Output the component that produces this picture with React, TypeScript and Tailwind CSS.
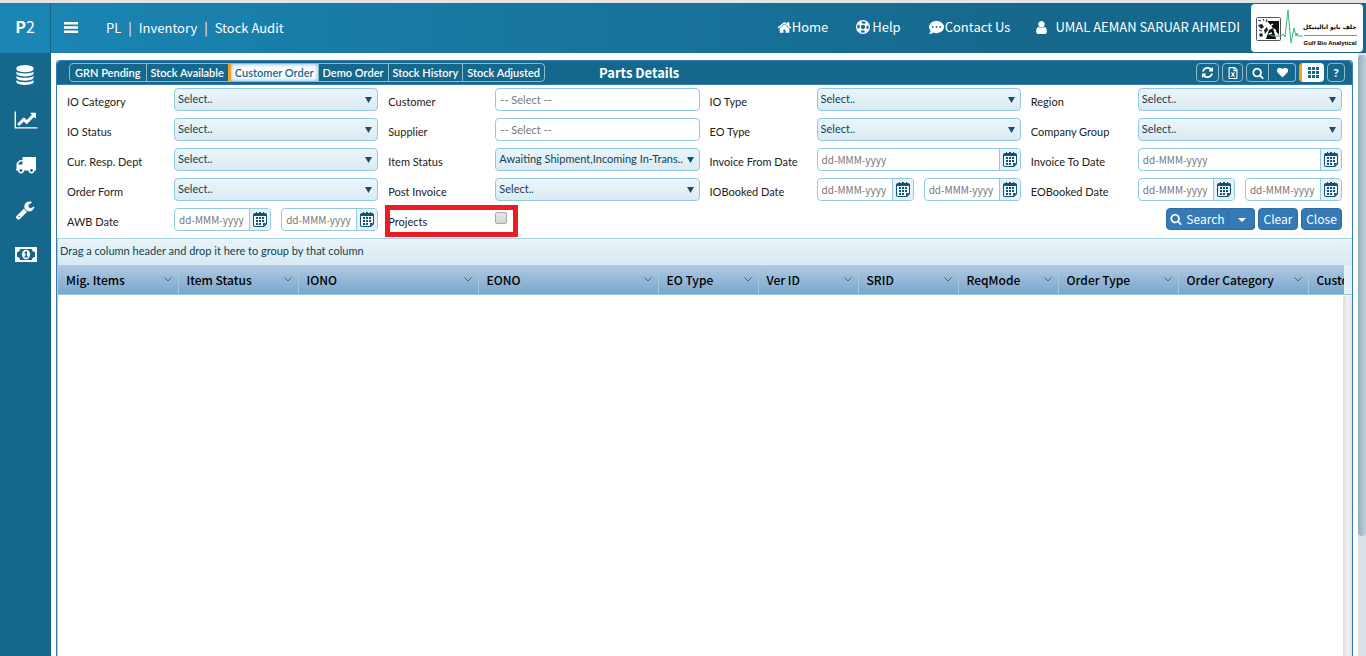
import { useId, type ReactNode } from 'react';
import { FaRegFileExcel, FaHeart, FaCommentDots } from 'react-icons/fa';

type IconProps = { className?: string };

const HomeIcon = ({ className }: IconProps) => (
  <svg viewBox="0 0 1792 1792" fill="currentColor" className={className} aria-hidden="true">
    <path d="M1472 992v480q0 26-19 45t-45 19h-384v-384h-256v384h-384q-26 0-45-19t-19-45v-480q0-1 .5-3t.5-3l575-474 575 474q1 2 1 6zm223-69l-62 74q-8 9-21 11h-3q-13 0-21-7l-692-577-692 577q-12 8-24 7-13-2-21-11l-62-74q-8-10-7-23.5t11-21.5l719-599q32-26 76-26t76 26l244 204v-195q0-14 9-23t23-9h192q14 0 23 9t9 23v408l219 182q10 8 11 21.5t-7 23.5z" />
  </svg>
);

const LifeRingIcon = ({ className }: IconProps) => (
  <svg viewBox="0 0 28 28" fill="none" stroke="currentColor" className={className} aria-hidden="true">
    <circle cx="14" cy="14" r="12.7" strokeWidth="2.6" />
    <circle cx="14" cy="14" r="5.6" strokeWidth="2.6" />
    <circle cx="14" cy="14" r="9.2" strokeWidth="6" strokeDasharray="7.2 7.25" strokeDashoffset="-3.6" />
  </svg>
);

const UserIcon = ({ className }: IconProps) => (
  <svg viewBox="0 0 1792 1792" fill="currentColor" className={className} aria-hidden="true">
    <path d="M1536 1399q0 109-62.5 187t-150.5 78h-854q-88 0-150.5-78t-62.5-187q0-85 8.5-160.5t31.5-152 58.5-131 94-89 134.5-34.5q131 128 313 128t313-128q76 0 134.5 34.5t94 89 58.5 131 31.5 152 8.5 160.5zm-256-887q0 159-112.5 271.5t-271.5 112.5-271.5-112.5-112.5-271.5 112.5-271.5 271.5-112.5 271.5 112.5 112.5 271.5z" />
  </svg>
);

const DatabaseIcon = ({ className }: IconProps) => (
  <svg viewBox="0 0 1792 1792" fill="currentColor" className={className} aria-hidden="true">
    <path d="M896 768q237 0 443-43t325-127v170q0 69-103 128t-280 93.5-385 34.5-385-34.5-280-93.5-103-128v-170q119 84 325 127t443 43zm0 768q237 0 443-43t325-127v170q0 69-103 128t-280 93.5-385 34.5-385-34.5-280-93.5-103-128v-170q119 84 325 127t443 43zm0-384q237 0 443-43t325-127v170q0 69-103 128t-280 93.5-385 34.5-385-34.5-280-93.5-103-128v-170q119 84 325 127t443 43zm0-1152q208 0 385 34.5t280 93.5 103 128v128q0 69-103 128t-280 93.5-385 34.5-385-34.5-280-93.5-103-128v-128q0-69 103-128t280-93.5 385-34.5z" />
  </svg>
);

const LineChartIcon = ({ className }: IconProps) => (
  <svg viewBox="0 0 2048 1792" fill="currentColor" className={className} aria-hidden="true">
    <path d="M2048 1536v128h-2048v-1536h128v1408h1920zm-128-1248v435q0 21-19.5 29.5t-35.5-7.5l-121-121-633 633q-10 10-23 10t-23-10l-233-233-416 416-192-192 585-585q10-10 23-10t23 10l233 233 464-464-121-121q-16-16-7.5-35.5t29.5-19.5h435q14 0 23 9t9 23z" />
  </svg>
);

const TruckIcon = ({ className }: IconProps) => (
  <svg viewBox="0 0 1792 1792" fill="currentColor" className={className} aria-hidden="true">
    <path d="M640 1408q0-52-38-90t-90-38-90 38-38 90 38 90 90 38 90-38 38-90zm-384-512h384v-256h-158q-13 0-22 9l-195 195q-9 9-9 22v30zm1280 512q0-52-38-90t-90-38-90 38-38 90 38 90 90 38 90-38 38-90zm256-1088v1024q0 15-4 26.5t-13.5 18.5-16.5 11.5-23.5 6-22.5 2-25.5 0-22.5-.5q0 106-75 181t-181 75-181-75-75-181h-384q0 106-75 181t-181 75-181-75-75-181h-64q-3 0-22.5.5t-25.5 0-22.5-2-23.5-6-16.5-11.5-13.5-18.5-4-26.5q0-26 19-45t45-19v-320q0-8-.5-35t0-38 2.5-34.5 6.5-37 14-30.5 22.5-30l198-198q19-19 50.5-32t58.5-13h160v-192q0-26 19-45t45-19h1024q26 0 45 19t19 45z" />
  </svg>
);

const WrenchIcon = ({ className }: IconProps) => (
  <svg viewBox="0 0 1792 1792" fill="currentColor" className={className} aria-hidden="true">
    <path d="M448 1472q0-26-19-45t-45-19-45 19-19 45 19 45 45 19 45-19 19-45zm644-420l-682 682q-37 37-90 37-52 0-91-37l-106-108q-38-36-38-90 0-53 38-91l681-681q39 98 114.5 173.5t173.5 114.5zm634-435q0 39-23 106-47 134-164.5 217.5t-258.5 83.5q-185 0-316.5-131.5t-131.5-316.5 131.5-316.5 316.5-131.5q58 0 121.5 16.5t107.5 46.5q16 11 16 28t-16 28l-293 169v224l193 107q5-3 79-48.5t135.5-81 70.5-35.5q15 0 23.5 10t8.5 25z" />
  </svg>
);

const MoneyIcon = ({ className }: IconProps) => (
  <svg viewBox="0 0 22 15" className={className} aria-hidden="true">
    <path fill="currentColor" d="M0 0h22v15H0z" />
    <path fill="#15678b" d="M5 2h12a3 3 0 0 0 3 3v5a3 3 0 0 0-3 3H5a3 3 0 0 0-3-3V5a3 3 0 0 0 3-3z" />
    <ellipse cx="11" cy="7.5" rx="4" ry="4.8" fill="currentColor" />
    <path fill="#15678b" d="M9.2 5.6 11 4.2h1v5h1v1.2H9.4V9.2h1.1V6.1l-.7.5z" />
  </svg>
);

const RefreshIcon = ({ className }: IconProps) => (
  <svg viewBox="0 0 1792 1792" fill="currentColor" className={className} aria-hidden="true">
    <path d="M1639 1056q0 5-1 7-64 268-268 434.5t-478 166.5q-146 0-282.5-55t-243.5-157l-129 129q-19 19-45 19t-45-19-19-45v-448q0-26 19-45t45-19h448q26 0 45 19t19 45-19 45l-137 137q71 66 161 102t187 36q134 0 250-65t186-179q11-17 53-117 8-23 30-23h192q13 0 22.5 9.5t9.5 22.5zm25-800v448q0 26-19 45t-45 19h-448q-26 0-45-19t-19-45 19-45l138-138q-148-137-349-137-134 0-250 65t-186 179q-11 17-53 117-8 23-30 23h-199q-13 0-22.5-9.5t-9.5-22.5v-7q65-268 270-434.5t480-166.5q146 0 284 55.5t245 156.5l130-129q19-19 45-19t45 19 19 45z" />
  </svg>
);

const SearchIcon = ({ className }: IconProps) => (
  <svg viewBox="0 0 1792 1792" fill="currentColor" className={className} aria-hidden="true">
    <path d="M1216 832q0-185-131.5-316.5t-316.5-131.5-316.5 131.5-131.5 316.5 131.5 316.5 316.5 131.5 316.5-131.5 131.5-316.5zm512 832q0 52-38 90t-90 38q-54 0-90-38l-343-342q-179 124-399 124-143 0-273.5-55.5t-225-150-150-225-55.5-273.5 55.5-273.5 150-225 225-150 273.5-55.5 273.5 55.5 225 150 150 225 55.5 273.5q0 220-124 399l343 343q37 37 37 90z" />
  </svg>
);

const GridIcon = ({ className }: IconProps) => (
  <svg viewBox="0 0 11 11" fill="currentColor" className={className} aria-hidden="true">
    <path d="M0 0h3v3H0zM4 0h3v3H4zM8 0h3v3H8zM0 4h3v3H0zM4 4h3v3H4zM8 4h3v3H8zM0 8h3v3H0zM4 8h3v3H4zM8 8h3v3H8z" />
  </svg>
);

const CalendarIcon = ({ className }: IconProps) => (
  <svg viewBox="0 0 14 15" fill="currentColor" className={className} aria-hidden="true">
    <path d="M2 1h10a2 2 0 0 1 2 2v9l-3 3H2a2 2 0 0 1-2-2V3a2 2 0 0 1 2-2z" />
    <path fill="#f1f8fb" d="M1 4h12v7l-3 3H2a1 1 0 0 1-1-1z" />
    <path d="M3 0h1v2H3zM10 0h1v2h-1zM6 0h2v2H6z" />
    <path d="M6 5h2v2H6zM9 5h2v2H9zM3 5h2v2H3zM3 8h2v2H3zM6 8h2v2H6zM9 8h2v2H9zM3 11h2v2H3zM6 11h2v2H6zM10 11h3l-3 3z" />
  </svg>
);

const Logo = () => (
  <div className="flex h-12 w-28 items-center rounded bg-white pl-1">
    <svg viewBox="0 0 48 46" className="h-[46px] w-12 shrink-0" aria-hidden="true">
      <rect x="1.500" y="12.500" width="24" height="23" rx="1" fill="#fff" stroke="#555" />
      <path d="M12 16h12v14z" fill="#111" />
      <path d="M11 34l3-9 4-2 3 11z" fill="#111" />
      <path d="M3 20l4-1 2 3-3 2zM9 25l3-3 1 3-3 4zM4 29l3-1 1 3-3 1z" fill="#222" />
      <path d="M3 15l3 1M8 14l1 2M12 14l-1 3M4 25l3 1" stroke="#333" />
      <path d="M15 21l3-2M19 24l2 2M14 29l3-1" stroke="#fff" strokeWidth="1.500" />
      <path d="M13 29l5 2h8l2-2 2 3 3-27 3 33 3-15 2 8 1-3 1 3h5" fill="none" stroke="#35b877" />
    </svg>
    <div className="flex flex-col items-end pt-4 whitespace-nowrap text-black">
      <span lang="ar" dir="rtl" className="pb-1 font-['DejaVu_Sans',sans-serif] text-[6px] leading-2 font-bold">
        جلف بايو اناليتيكل
      </span>
      <span className="border-t border-[#35b877] pt-px font-['Liberation_Sans_Narrow','Liberation_Sans',sans-serif] text-[6px] leading-3 font-bold">
        Gulf Bio Analytical
      </span>
    </div>
  </div>
);

const Header = () => (
  <header className="flex h-[53px] border-t-3 border-[#e4e4e4] bg-linear-to-r from-[#1b86b5] to-[#15688c] to-75% font-['Noto_Sans_CJK_SC',sans-serif] text-[13px] leading-5 text-white">
    <a href="#" className="flex w-[51px] items-center justify-center border-r border-[#15678b] pb-1 text-base">
      <b>P</b>2
    </a>
    <button type="button" aria-label="Toggle menu" className="ml-3 px-px pb-0.5">
      <svg viewBox="0 0 14 11" fill="currentColor" className="h-[11px] w-3.5" aria-hidden="true">
        <path d="M0 0h14v2.500H0zM0 4.250h14v2.500H0zM0 8.500h14V11H0z" />
      </svg>
    </button>
    <nav aria-label="Breadcrumb" className="ml-[27px] flex items-center gap-[7px]">
      <a href="#">PL</a>
      <span>|</span>
      <a href="#">Inventory</a>
      <span>|</span>
      <a href="#">Stock Audit</a>
    </nav>
    <nav aria-label="Main" className="ml-auto flex items-center gap-7 pb-0.5">
      <a href="#" className="flex items-center">
        <HomeIcon className="size-[15px]" />
        Home
      </a>
      <a href="#" className="flex items-center gap-0.5">
        <LifeRingIcon className="size-3.5" />
        Help
      </a>
      <a href="#" className="flex items-center gap-px">
        <FaCommentDots className="size-[15px]" />
        Contact Us
      </a>
      <a href="#" className="-ml-1 flex items-center gap-1.5">
        <UserIcon className="size-[15px]" />
        UMAL AEMAN SARUAR AHMEDI
      </a>
    </nav>
    <a href="#" aria-label="Gulf Bio Analytical" className="mt-px mr-[3px] ml-[11px]">
      <Logo />
    </a>
  </header>
);

const Sidebar = () => (
  <aside className="w-[51px] shrink-0 bg-[#15678b] text-white">
    <nav aria-label="Modules" className="-mt-px flex flex-col">
      <a href="#" aria-label="Stock" className="flex h-[45px] items-center justify-center pr-0.5">
        <DatabaseIcon className="size-5" />
      </a>
      <a href="#" aria-label="Reports" className="flex h-[45px] items-center justify-center">
        <LineChartIcon className="h-5 w-6" />
      </a>
      <a href="#" aria-label="Shipping" className="flex h-[45px] items-center justify-center">
        <TruckIcon className="size-[21px]" />
      </a>
      <a href="#" aria-label="Settings" className="flex h-[45px] items-center justify-center pr-0.5">
        <WrenchIcon className="size-5" />
      </a>
      <a href="#" aria-label="Finance" className="flex h-[45px] items-center justify-center">
        <MoneyIcon className="h-[15px] w-[22px]" />
      </a>
    </nav>
  </aside>
);

const tabs = ['GRN Pending', 'Stock Available', 'Customer Order', 'Demo Order', 'Stock History', 'Stock Adjusted'];

const toolButton = 'flex h-[19px] items-center justify-center';

const TitleBar = () => (
  <div className="flex h-6 items-center rounded-t border-b border-[#337ab7] bg-[#15688c] pr-[7px] pl-3 text-white">
    <div className="flex h-[19px] rounded-sm border border-[#8fb9cc]">
      {tabs.map((tab) =>
        tab === 'Customer Order' ? (
          <button
            key={tab}
            type="button"
            aria-pressed="true"
            className="border-l-3 border-[#f9a11b] bg-white px-1 font-semibold text-[#15688c] shadow-[inset_0_0_4px_#66afe9]"
          >
            {tab}
          </button>
        ) : (
          <button key={tab} type="button" className="border-l border-[#8fb9cc] px-1 font-semibold first:border-l-0 first:px-[5px]">
            {tab}
          </button>
        )
      )}
    </div>
    <h1 className="ml-[54px] font-['Noto_Sans_CJK_SC',sans-serif] text-[13px] leading-5 font-bold">Parts Details</h1>
    <div className="ml-auto flex gap-[3px]">
      <button type="button" aria-label="Refresh" className={`${toolButton} w-[23px] rounded-sm border border-[#8fb9cc]`}>
        <RefreshIcon className="size-[13px]" />
      </button>
      <button type="button" aria-label="Export to Excel" className={`${toolButton} w-[21px] rounded-sm border border-[#8fb9cc]`}>
        <FaRegFileExcel className="size-3" />
      </button>
      <div className="flex">
        <button type="button" aria-label="Find" className={`${toolButton} w-[23px] rounded-l-sm border border-[#8fb9cc]`}>
          <SearchIcon className="size-3" />
        </button>
        <button type="button" aria-label="Favourites" className={`${toolButton} w-[27px] rounded-r-sm border border-l-0 border-[#8fb9cc]`}>
          <FaHeart className="size-[11px]" />
        </button>
      </div>
      <button
        type="button"
        aria-label="Grid view"
        aria-pressed="true"
        className={`${toolButton} w-[25px] rounded-sm border-l-3 border-[#f9a11b] bg-white text-[#15688c]`}
      >
        <GridIcon className="size-[11px]" />
      </button>
      <button type="button" className={`${toolButton} w-[18px] rounded-sm border border-[#8fb9cc] text-xs font-black`}>
        ?
      </button>
    </div>
  </div>
);

const Cell = ({ id, label, children }: { id: string; label: string; children: ReactNode }) => (
  <div className="grid h-[30px] grid-cols-3">
    <label htmlFor={id} className="truncate px-[5px] pt-[9px]">
      {label}
    </label>
    <div className="col-span-2 px-[5px] pt-[3px]">{children}</div>
  </div>
);

const SelectField = ({ label, value = 'Select..' }: { label: string; value?: string }) => {
  const id = useId();
  return (
    <Cell id={id} label={label}>
      <div className="relative">
        <select
          id={id}
          className="block h-[23px] w-full appearance-none rounded-sm border border-[#94cae1] bg-linear-to-b from-[#ebf5f9] to-[#dbebf3] pr-3 pb-px pl-[3px] text-[#153f52]"
        >
          <option>{value}</option>
        </select>
        <svg viewBox="0 0 7 6" fill="#15526f" className="pointer-events-none absolute top-[9px] right-1.5 h-1.5 w-[7px]" aria-hidden="true">
          <path d="M0 0h7L3.500 6z" />
        </svg>
      </div>
    </Cell>
  );
};

const TextField = ({ label }: { label: string }) => {
  const id = useId();
  return (
    <Cell id={id} label={label}>
      <input
        id={id}
        type="text"
        placeholder="-- Select --"
        className="block h-[23px] w-full rounded-sm border border-[#94cae1] px-1 placeholder:text-[#777]"
      />
    </Cell>
  );
};

const DateInput = ({ id, label }: { id?: string; label?: string }) => (
  <div className="flex h-[23px] min-w-0 flex-1 overflow-hidden rounded-sm border border-[#94cae1]">
    <input
      id={id}
      aria-label={label}
      type="text"
      placeholder="dd-MMM-yyyy"
      className="min-w-0 flex-1 pl-1 font-['Noto_Sans_CJK_SC',sans-serif] text-[10px] placeholder:text-[#777]"
    />
    <button
      type="button"
      aria-label="Open calendar"
      className="flex w-[21px] items-center justify-center border-l border-[#94cae1] bg-[#e6f2f7] text-[#15526f]"
    >
      <CalendarIcon className="h-[15px] w-3.5" />
    </button>
  </div>
);

const DateField = ({ label, range }: { label: string; range?: boolean }) => {
  const id = useId();
  return (
    <Cell id={id} label={label}>
      <div className="flex gap-2.5">
        <DateInput id={id} />
        {range && <DateInput label={`${label} to`} />}
      </div>
    </Cell>
  );
};

const SearchForm = () => (
  <form className="grid grid-cols-4 px-[5px] pb-[3px] text-[#222]">
    <SelectField label="IO Category" />
    <TextField label="Customer" />
    <SelectField label="IO Type" />
    <SelectField label="Region" />

    <SelectField label="IO Status" />
    <TextField label="Supplier" />
    <SelectField label="EO Type" />
    <SelectField label="Company Group" />

    <SelectField label="Cur. Resp. Dept" />
    <SelectField label="Item Status" value="Awaiting Shipment,Incoming In-Trans.." />
    <DateField label="Invoice From Date" />
    <DateField label="Invoice To Date" />

    <SelectField label="Order Form" />
    <SelectField label="Post Invoice" />
    <DateField label="IOBooked Date" range />
    <DateField label="EOBooked Date" range />

    <DateField label="AWB Date" range />
    <div className="relative">
      <Cell id="projects" label="Projects">
        <input
          id="projects"
          type="checkbox"
          className="mt-1 block size-3 appearance-none rounded-xs border border-[#a9a9a9] bg-linear-to-b from-[#e6e6e6] to-[#d6d6d6]"
        />
      </Cell>
      {/* highlight around the Projects option */}
      <div className="pointer-events-none absolute top-0 left-0.5 h-8 w-[133px] border-5 border-[#ed1c24]" />
    </div>
    <div className="col-start-4 flex h-[30px] items-start justify-end gap-[3px] px-[5px] pt-[3px] font-['Noto_Sans_CJK_SC',sans-serif] text-xs text-white">
      <div className="flex">
        <button type="button" className="flex h-[22px] w-[63px] items-center justify-center gap-1 rounded-l-sm border border-[#2e6da4] bg-[#337ab7]">
          <SearchIcon className="size-3" />
          Search
        </button>
        <button
          type="button"
          aria-label="More search options"
          className="flex h-[22px] w-[26px] items-center justify-center rounded-r-sm border border-l-0 border-[#2e6da4] bg-[#337ab7] pt-px"
        >
          <svg viewBox="0 0 8 4" fill="currentColor" className="h-1 w-2" aria-hidden="true">
            <path d="M0 0h8L4 4z" />
          </svg>
        </button>
      </div>
      <button type="button" className="h-[22px] w-10 rounded-sm border border-[#2e6da4] bg-[#337ab7]">Clear</button>
      <button type="button" className="h-[22px] w-[41px] rounded-sm border border-[#2e6da4] bg-[#337ab7]">Close</button>
    </div>
  </form>
);

const columns = [
  { name: 'Mig. Items', width: 120 },
  { name: 'Item Status', width: 120 },
  { name: 'IONO', width: 180 },
  { name: 'EONO', width: 180 },
  { name: 'EO Type', width: 100 },
  { name: 'Ver ID', width: 100 },
  { name: 'SRID', width: 100 },
  { name: 'ReqMode', width: 100 },
  { name: 'Order Type', width: 120 },
  { name: 'Order Category', width: 130 },
  { name: 'Customer', width: 120 },
];

const ResultsGrid = () => (
  <div className="flex flex-1 flex-col border-l border-[#a5cfe0]">
    <p className="h-[27px] border-t border-[#a9d3e4] bg-linear-to-b from-[#e9f4f9] to-[#d8eaf2] pl-0.5 leading-6 text-[#153f52]">
      Drag a column header and drop it here to group by that column
    </p>
    <div className="flex border-b border-[#94cae1] bg-[#e3f0f6] pr-2">
      <div className="min-w-0 flex-1 overflow-hidden">
        <table className="w-[1370px] table-fixed border-collapse">
          <thead>
            <tr className="h-[29px] bg-linear-to-b from-[#b1cbe2] to-[#7aa5cc]">
              {columns.map((column) => (
                <th
                  key={column.name}
                  scope="col"
                  style={{ width: column.width }}
                  className="border-r border-[#9fcbe0] p-0 pr-1.5 pl-2 text-left font-['Noto_Sans_CJK_SC',sans-serif] text-xs font-medium text-black"
                >
                  <span className="flex items-center justify-between">
                    {column.name}
                    <svg viewBox="0 0 8 5" fill="none" stroke="#2e6687" className="h-[5px] w-2" aria-hidden="true">
                      <path d="M.5.500 4 4 7.500.500" />
                    </svg>
                  </span>
                </th>
              ))}
            </tr>
          </thead>
        </table>
      </div>
    </div>
    <div className="flex flex-1 justify-end">
      <div className="w-[9px] rounded-t bg-linear-to-r from-[#dcdcdc] via-[#f0f0f0] to-[#e4e4e4]" />
    </div>
  </div>
);

export default function App() {
  return (
    <div className="flex min-h-screen flex-col bg-white font-['Lato',sans-serif] text-[11px] leading-4">
      <Header />
      <div className="flex flex-1">
        <Sidebar />
        <main className="mt-[7px] mr-[5px] ml-[5px] flex min-w-0 flex-1 flex-col rounded-t border border-b-0 border-[#337ab7]">
          <TitleBar />
          <SearchForm />
          <ResultsGrid />
        </main>
        <div className="flex w-2 flex-col bg-[#dbe2e7] pt-0.5" aria-hidden="true">
          <div className="flex-4 rounded-full bg-linear-to-r from-[#92b0bd] to-[#bdd1da]" />
          <div className="flex-1" />
        </div>
      </div>
    </div>
  );
}
